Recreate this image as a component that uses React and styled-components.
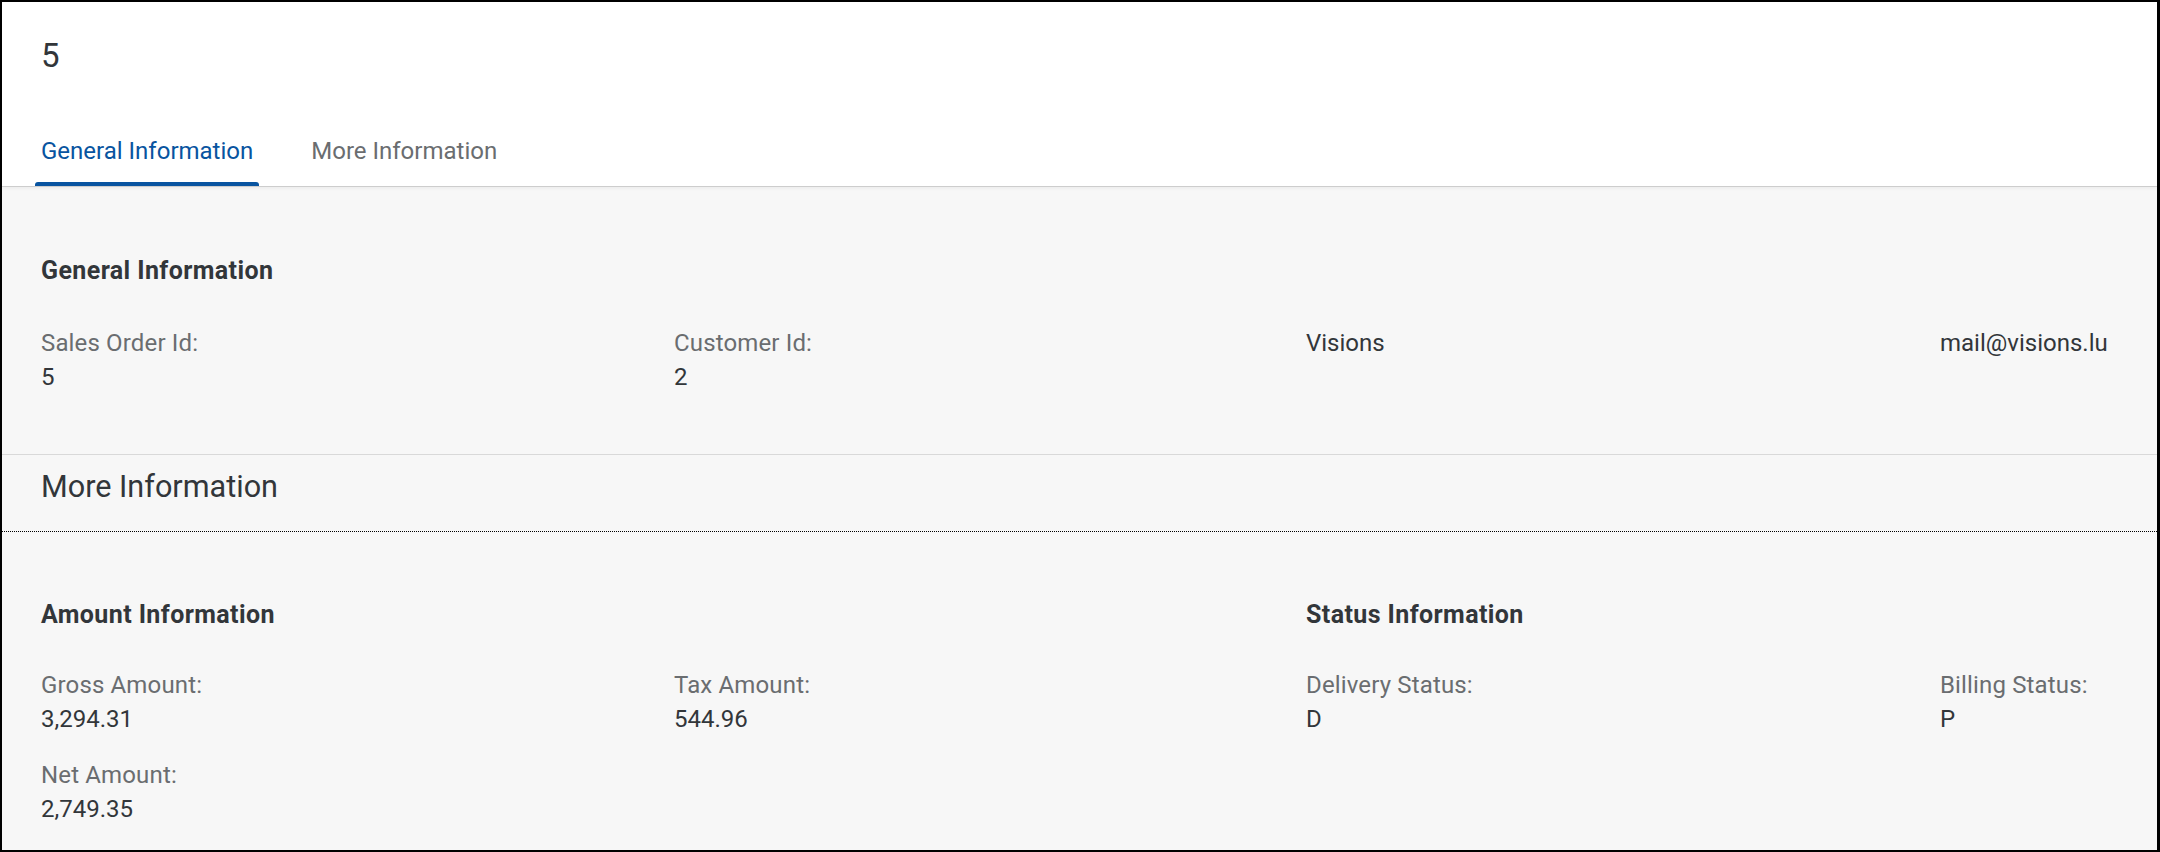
import React from "react";
import styled, { createGlobalStyle } from "styled-components";

const GlobalStyle = createGlobalStyle`
  html, body {
    margin: 0;
    padding: 0;
    background: #f7f7f7;
  }
  body {
    font-family: Roboto, "Liberation Sans", Arial, sans-serif;
    color: #32363a;
  }
  * { box-sizing: border-box; }
`;

const Frame = styled.div`
  width: 2160px;
  height: 852px;
  border: 2px solid #000;
  border-right-width: 3px;
  background: #f7f7f7;
  overflow: hidden;
  display: flex;
  flex-direction: column;
`;

const Header = styled.header`
  background: #fff;
  padding-top: 34px;
  box-shadow: 0 1px 0 rgba(0, 0, 0, 0.13), 0 2px 4px rgba(0, 0, 0, 0.06);
  position: relative;
  z-index: 1;
`;

const Title = styled.h1`
  margin: 0;
  padding-left: 39px;
  font-size: 33px;
  font-weight: 400;
  line-height: 40px;
  color: #32363a;
`;

const TabBar = styled.nav`
  margin-top: 38px;
  height: 72px;
  display: flex;
  align-items: stretch;
  padding-left: 33px;
  gap: 46px;
`;

const Tab = styled.div`
  position: relative;
  display: flex;
  align-items: center;
  padding: 2px 6px 0;
  font-size: 24px;
  color: ${(p) => (p.$active ? "#0854a0" : "#6a6d70")};
  &::after {
    content: "";
    display: ${(p) => (p.$active ? "block" : "none")};
    position: absolute;
    left: 0;
    right: 0;
    bottom: 0;
    height: 4px;
    border-radius: 3px 3px 0 0;
    background: #0854a0;
  }
`;

const Section = styled.section`
  padding: ${(p) => p.$top}px 0 ${(p) => p.$bottom}px 39px;
`;

const Divider = styled.hr`
  margin: 0;
  border: 0;
  border-top: 1px solid #d9d9d9;
`;

const SectionHeading = styled.h2`
  margin: 0;
  padding: 12px 0 24px 39px;
  font-size: 30.6px;
  font-weight: 400;
  line-height: 40px;
  color: #32363a;
  border-bottom: 1px dotted #000;
`;

const Columns = styled.div`
  display: grid;
  grid-template-columns: 633px 632px 634px 1fr;
`;

const Block = styled.div`
  grid-column: span ${(p) => p.$span || 1};
  display: flex;
  flex-direction: column;
`;

const BlockTitle = styled.h3`
  margin: 0 0 ${(p) => p.$gap}px;
  font-size: 25px;
  letter-spacing: 0.4px;
  font-weight: 700;
  line-height: 30px;
  color: #32363a;
`;

const FieldGrid = styled.div`
  display: grid;
  grid-template-columns: repeat(${(p) => p.$cols}, ${(p) => p.$width});
  row-gap: 22px;
`;

const Field = styled.div`
  display: flex;
  flex-direction: column;
`;

const Label = styled.span`
  font-size: 24px;
  letter-spacing: 0.15px;
  line-height: 34px;
  color: #6a6d70;
`;

const Value = styled.span`
  font-size: 24px;
  line-height: 34px;
  color: #32363a;
`;

const Plain = styled.span`
  font-size: 24px;
  line-height: 34px;
  color: #32363a;
`;

function FieldItem({ label, value }) {
  return (
    <Field>
      <Label>{label}</Label>
      <Value>{value}</Value>
    </Field>
  );
}

export default function App() {
  return (
    <>
      <GlobalStyle />
      <Frame>
        <Header>
          <Title>5</Title>
          <TabBar>
            <Tab $active>General Information</Tab>
            <Tab>More Information</Tab>
          </TabBar>
        </Header>

        <Section $top={70} $bottom={60}>
          <BlockTitle $gap={40}>General Information</BlockTitle>
          <Columns>
            <FieldItem label="Sales Order Id:" value="5" />
            <FieldItem label="Customer Id:" value="2" />
            <Field>
              <Plain>Visions</Plain>
            </Field>
            <Field>
              <Plain>mail@visions.lu</Plain>
            </Field>
          </Columns>
        </Section>

        <Divider />
        <SectionHeading>More Information</SectionHeading>

        <Section $top={68} $bottom={20}>
          <Columns>
            <Block $span={2}>
              <BlockTitle $gap={38}>Amount Information</BlockTitle>
              <FieldGrid $cols={2} $width="633px">
                <FieldItem label="Gross Amount:" value="3,294.31" />
                <FieldItem label="Tax Amount:" value="544.96" />
                <FieldItem label="Net Amount:" value="2,749.35" />
              </FieldGrid>
            </Block>
            <Block $span={2}>
              <BlockTitle $gap={38}>Status Information</BlockTitle>
              <FieldGrid $cols={2} $width="634px">
                <FieldItem label="Delivery Status:" value="D" />
                <FieldItem label="Billing Status:" value="P" />
              </FieldGrid>
            </Block>
          </Columns>
        </Section>
      </Frame>
    </>
  );
}
